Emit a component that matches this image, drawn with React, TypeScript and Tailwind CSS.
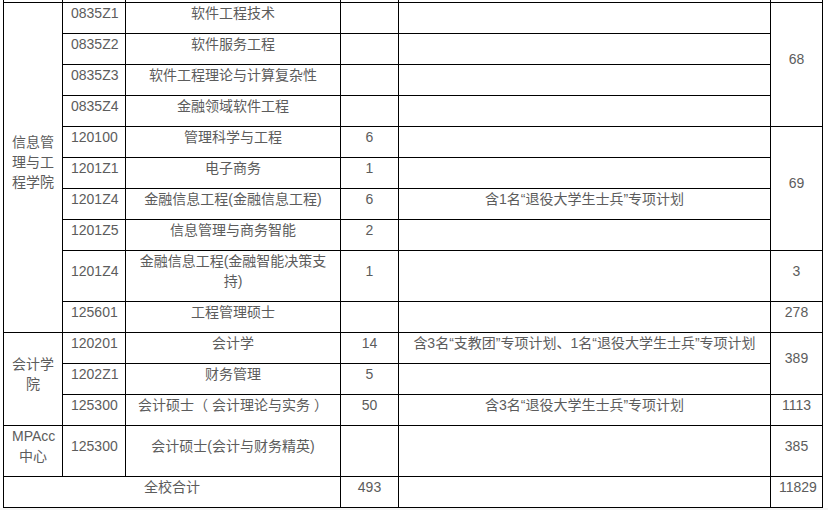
import React from "react";

type Cell = {
  text?: React.ReactNode;
  rowSpan?: number;
  colSpan?: number;
};

const rows: Cell[][] = [
  [
    { text: "信息管理与工程学院", rowSpan: 10 },
    { text: "0835Z1" },
    { text: "软件工程技术" },
    {},
    {},
    { text: "68", rowSpan: 4 },
  ],
  [{ text: "0835Z2" }, { text: "软件服务工程" }, {}, {}],
  [{ text: "0835Z3" }, { text: "软件工程理论与计算复杂性" }, {}, {}],
  [{ text: "0835Z4" }, { text: "金融领域软件工程" }, {}, {}],
  [
    { text: "120100" },
    { text: "管理科学与工程" },
    { text: "6" },
    {},
    { text: "69", rowSpan: 4 },
  ],
  [{ text: "1201Z1" }, { text: "电子商务" }, { text: "1" }, {}],
  [
    { text: "1201Z4" },
    { text: "金融信息工程(金融信息工程)" },
    { text: "6" },
    { text: "含1名“退役大学生士兵”专项计划" },
  ],
  [{ text: "1201Z5" }, { text: "信息管理与商务智能" }, { text: "2" }, {}],
  [
    { text: "1201Z4" },
    { text: "金融信息工程(金融智能决策支持)" },
    { text: "1" },
    {},
    { text: "3" },
  ],
  [{ text: "125601" }, { text: "工程管理硕士" }, {}, {}, { text: "278" }],
  [
    { text: "会计学院", rowSpan: 3 },
    { text: "120201" },
    { text: "会计学" },
    { text: "14" },
    { text: "含3名“支教团”专项计划、1名“退役大学生士兵”专项计划" },
    { text: "389", rowSpan: 2 },
  ],
  [{ text: "1202Z1" }, { text: "财务管理" }, { text: "5" }, {}],
  [
    { text: "125300" },
    { text: "会计硕士（ 会计理论与实务 ）" },
    { text: "50" },
    { text: "含3名“退役大学生士兵”专项计划" },
    { text: "1113" },
  ],
  [
    { text: "MPAcc中心" },
    { text: "125300" },
    { text: "会计硕士(会计与财务精英)" },
    {},
    {},
    { text: "385" },
  ],
  [{ text: "全校合计", colSpan: 3 }, { text: "493" }, {}, { text: "11829" }],
];

const cellCls =
  "border border-black px-2 pt-0 pb-[10px] text-center align-middle";

export default function App() {
  return (
    <div className="w-[828px] h-[510px] flex flex-col bg-white font-['Liberation_Sans','Noto_Sans_CJK_SC',sans-serif] text-[14px] leading-5 text-[#5c5c5c]">
      <div className="pl-[3px]">
        <table className="table-fixed border-collapse w-[820px]">
          <colgroup>
            <col className="w-[59px]" />
            <col className="w-[63px]" />
            <col className="w-[215px]" />
            <col className="w-[58px]" />
            <col className="w-[372px]" />
            <col className="w-[52px]" />
          </colgroup>
          <tbody>
            {/* tail of the row above, cut off by the crop */}
            <tr>
              {[0, 1, 2, 3, 4, 5].map((i) => (
                <td
                  key={i}
                  className="border-x border-b border-black border-t-0 p-0 h-[2px]"
                />
              ))}
            </tr>
            {rows.map((row, r) => (
              <tr key={r}>
                {row.map((c, i) => (
                  <td
                    key={i}
                    rowSpan={c.rowSpan}
                    colSpan={c.colSpan}
                    className={cellCls}
                  >
                    {c.text}
                  </td>
                ))}
              </tr>
            ))}
          </tbody>
        </table>
      </div>
      <div className="flex-1 bg-[#f4f4f4]" />
    </div>
  );
}
